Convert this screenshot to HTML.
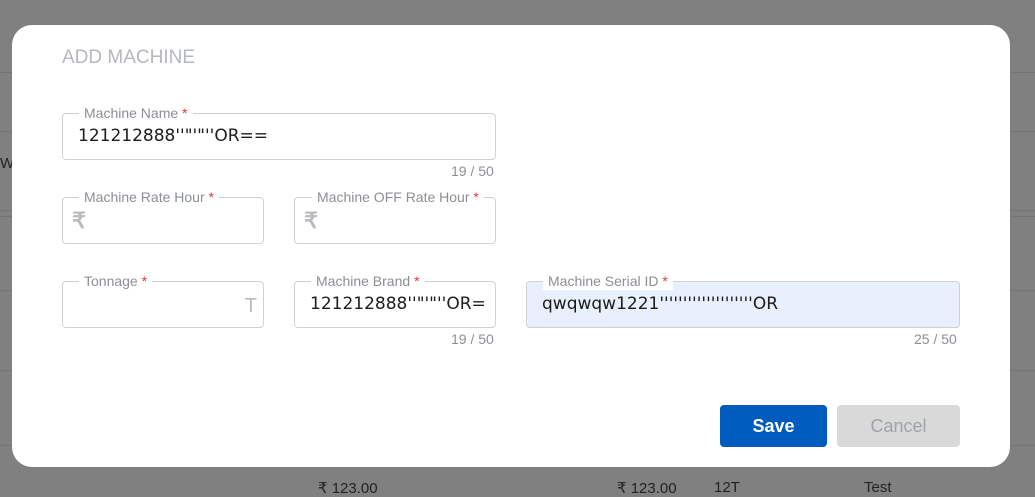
<!DOCTYPE html>
<html><head><style>
*{box-sizing:border-box;margin:0;padding:0}
body{width:1035px;height:494px;background:#808080;font-family:"Liberation Sans",sans-serif;position:relative;overflow:hidden}
.ln{position:absolute;left:0;right:0;height:1px;background:#747474}
.modal{position:absolute;left:12px;top:25px;width:998px;height:442px;background:#fff;border-radius:20px}
.t{position:absolute;left:62px;top:47px;font-size:19px;color:#b5b8bd}
.f{position:absolute;border:1px solid #cfd1d6;border-radius:4px;height:47px;background:#fff}
.f label{position:absolute;top:-10px;left:16px;background:#fff;padding:0 5px;font-size:14px;color:#8c8f94;line-height:18px;white-space:nowrap}
.f label b{color:#e53935;font-weight:normal}
.f .v{position:absolute;left:15px;top:12px;font-family:"DejaVu Sans",sans-serif;font-size:17px;color:#1c1c1c;white-space:nowrap;overflow:hidden;right:4px}
.f .r{position:absolute;left:9px;top:10px;font-size:22px;color:#b9bbbf;font-weight:bold}
.c{position:absolute;font-size:14px;color:#8c8f94}
.btn{position:absolute;top:405px;height:42px;border-radius:4px;font-size:18px;text-align:center;line-height:42px}
.bg{position:absolute;font-size:15px;color:#222}
</style></head><body>
<div class="ln" style="top:72px"></div>
<div class="ln" style="top:131px"></div>
<div class="ln" style="top:210px"></div>
<div class="ln" style="top:216px"></div>
<div class="ln" style="top:290px"></div>
<div class="ln" style="top:370px"></div>
<div class="ln" style="top:445px"></div>
<div class="bg" style="left:0;top:155px">W</div>
<div class="bg" style="left:318px;top:479px">₹ 123.00</div>
<div class="bg" style="left:617px;top:479px">₹ 123.00</div>
<div class="bg" style="left:714px;top:479px">12T</div>
<div class="bg" style="left:864px;top:479px">Test</div>
<div class="modal"></div>
<div class="t">ADD MACHINE</div>
<div class="f" style="left:62px;top:113px;width:434px"><label>Machine Name <b>*</b></label><div class="v">121212888''"'"''OR==</div></div>
<div class="c" style="left:451px;top:163px">19 / 50</div>
<div class="f" style="left:62px;top:197px;width:202px"><label>Machine Rate Hour <b>*</b></label><div class="r">₹</div></div>
<div class="f" style="left:294px;top:197px;width:202px"><label style="left:17px;padding:0 5px">Machine OFF Rate Hour <b>*</b></label><div class="r">₹</div></div>
<div class="f" style="left:62px;top:281px;width:202px"><label>Tonnage <b>*</b></label><div class="r" style="left:auto;right:6px;font-size:20px;top:13px;font-weight:normal">T</div></div>
<div class="f" style="left:294px;top:281px;width:202px"><label>Machine Brand <b>*</b></label><div class="v">121212888''"'"''OR=</div></div>
<div class="c" style="left:451px;top:331px">19 / 50</div>
<div class="f" style="left:526px;top:281px;width:434px;background:#e8f0fd"><label>Machine Serial ID <b>*</b></label><div class="v">qwqwqw1221''''''''''''''''''''OR</div></div>
<div class="c" style="left:914px;top:331px">25 / 50</div>
<div class="btn" style="left:720px;width:107px;background:#005bbf;color:#fff;font-weight:bold">Save</div>
<div class="btn" style="left:837px;width:123px;background:#d9d9d9;color:#9ea3ab">Cancel</div>
</body></html>
